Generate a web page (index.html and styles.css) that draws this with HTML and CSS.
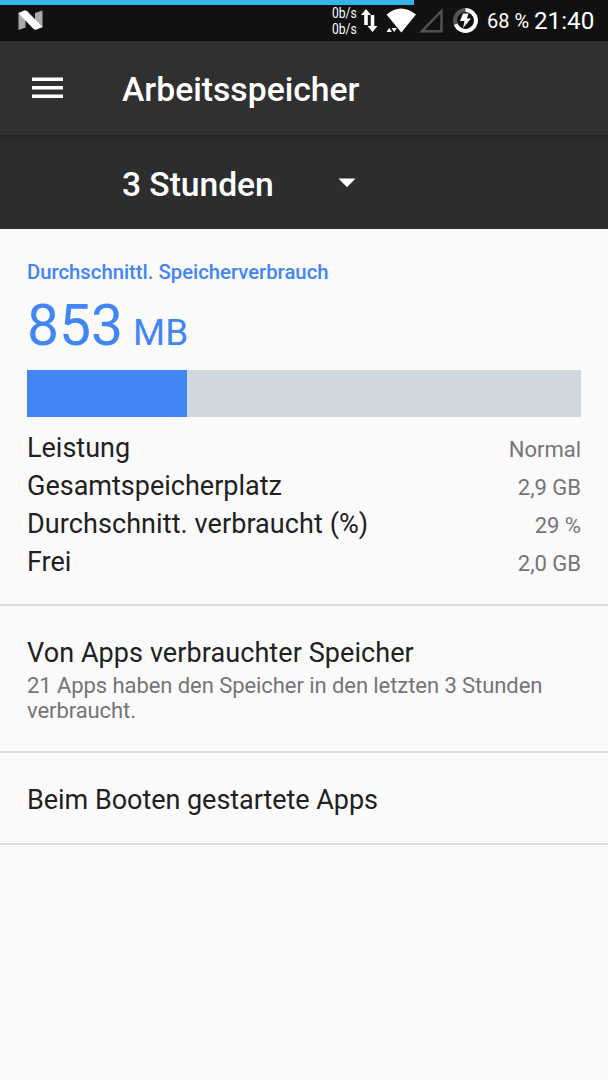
FILE: index.html
```html
<!DOCTYPE html>
<html lang="de">
<head>
<meta charset="utf-8">
<title>Arbeitsspeicher</title>
<link rel="stylesheet" href="styles.css">
</head>
<body>
<header class="status">
  <div class="progress"></div>
  <svg class="nougat" width="26" height="22" viewBox="0 0 26 22"><path fill="#aaa" d="M.5 2.500H7.500V17.500L.5 20zM17 3 24.500 .5V17.500H17z"/><path fill="#fff" d="M.5 3.200 6.500 .3 9 1 24.500 17 18 19.800 15.800 19.300z"/></svg>
  <div class="speed"><span>0b/s</span><span>0b/s</span></div>
  <svg class="signals" width="126" height="36" viewBox="356 5 126 36">
    <path fill="#fff" d="M366 9l5 6h-3.200v10h-3.600V15H361zM372.500 32l-5-6h3.200V15h3.600v11h3.200z"/>
    <path fill="#fff" d="M386.500 14.500Q401 2.500 416 14.500L401.300 32.500zM386.500 32l2.700-4 2.700 4zM391.500 28h5.400l-2.700 4z"/>
    <path fill="none" stroke="#505050" stroke-width="2.500" d="M422 31.200 441.500 11v20.200z"/>
    <circle cx="465.500" cy="20.500" r="10.500" fill="none" stroke="#555" stroke-width="4"/>
    <path fill="none" stroke="#fff" stroke-width="4" d="M465.500 10A10.500 10.500 0 1 1 455.700 24.300"/>
    <path fill="#fff" d="M463 13.500h5.500l-1.500 5h4l-8 9.500 1.500-7h-4.500z"/>
  </svg>
  <span class="battery">68 %</span>
  <span class="clock">21:40</span>
</header>
<div class="toolbar">
  <svg class="menu" width="31" height="22" viewBox="0 0 31 22"><path stroke="#fff" stroke-width="3.500" d="M0 2.200h31M0 10.800h31M0 19.300h31"/></svg>
  <h1 class="title">Arbeitsspeicher</h1>
</div>
<div class="filter">
  <span class="period">3 Stunden</span>
  <svg class="caret" width="18" height="10" viewBox="0 0 18 10"><path fill="#fff" d="M.5.500h17L9 9.300z"/></svg>
</div>
<main>
  <section class="summary">
    <h2 class="label">Durchschnittl. Speicherverbrauch</h2>
    <div class="usage"><span class="number">853</span><span class="unit">MB</span></div>
    <div class="bar"><div class="fill" style="width:28.97%"></div></div>
    <div class="row"><span>Leistung</span><span class="value">Normal</span></div>
    <div class="row"><span>Gesamtspeicherplatz</span><span class="value">2,9 GB</span></div>
    <div class="row"><span class="wide">Durchschnitt. verbraucht (%)</span><span class="value">29 %</span></div>
    <div class="row"><span>Frei</span><span class="value">2,0 GB</span></div>
  </section>
  <section class="item apps">
    <div class="item-title wide">Von Apps verbrauchter Speicher</div>
    <div class="item-text">21 Apps haben den Speicher in den letzten 3 Stunden verbraucht.</div>
  </section>
  <section class="item boot">
    <div class="item-title">Beim Booten gestartete Apps</div>
  </section>
</main>
</body>
</html>
```
FILE: styles.css
```css
* { box-sizing: border-box; }
body { margin: 0; min-height: 1080px; background: #fafafa; color: #212121; font-family: Roboto, sans-serif; }
h1, h2 { margin: 0; font-weight: 500; }
.status { position: relative; display: flex; height: 41px; background: #111; color: #fff; }
.progress { position: absolute; left: 0; top: 0; width: 414px; height: 5px; background: #33b5e5; }
.nougat { margin: 10px 0 0 18px; }
.speed { display: flex; flex-direction: column; width: 25px; margin: 5px 0 0 288px; font-size: 14px; line-height: 16px; white-space: nowrap; }
.speed span { transform: scaleX(.86); transform-origin: left; }
.signals { margin: 5px 0 0 -1px; }
.battery { width: 47px; margin-left: 5px; font-size: 20px; line-height: 42px; white-space: nowrap; }
.clock { font-size: 24.200px; line-height: 43px; }
.toolbar { display: flex; align-items: center; height: 94px; padding: 3px 0 0 32px; background: #303030; color: #fff; }
.menu { margin-top: -3px; }
.title, .period { font-size: 33.700px; font-weight: 500; line-height: 40px; }
.title { margin-left: 59px; }
.filter { display: flex; align-items: center; height: 94px; padding: 5px 0 0 122px; background: linear-gradient(#262626, #2d2d2d 7px); color: #fff; }
.period { width: 216px; letter-spacing: -.08px; }
.caret { margin-top: -3px; }
.summary { height: 377px; padding: 31px 27px 0; border-bottom: 2px solid #ddd; }
.label { color: #4285f4; font-size: 20.300px; line-height: 24px; }
.usage { display: flex; align-items: baseline; gap: 10px; height: 86px; color: #4285f4; line-height: 83px; }
.number { font-size: 57px; }
.unit { font-size: 36.800px; }
.bar { height: 47px; margin-bottom: 12px; background: #cfd8dc; }
.fill { height: 100%; background: #4285f4; }
.row { display: flex; justify-content: space-between; align-items: baseline; height: 38px; font-size: 27px; line-height: 38px; }
.wide { letter-spacing: .08px; }
.value { color: #757575; font-size: 22px; }
.item { padding: 0 27px; border-bottom: 2px solid #ddd; }
.apps { height: 147px; padding-top: 31px; }
.boot { height: 92px; padding-top: 31px; }
.item-title { font-size: 27px; line-height: 32px; }
.boot .item-title { letter-spacing: -.04px; }
.item-text { margin-top: 4px; color: #757575; font-size: 22px; line-height: 25px; letter-spacing: -.07px; }
```
